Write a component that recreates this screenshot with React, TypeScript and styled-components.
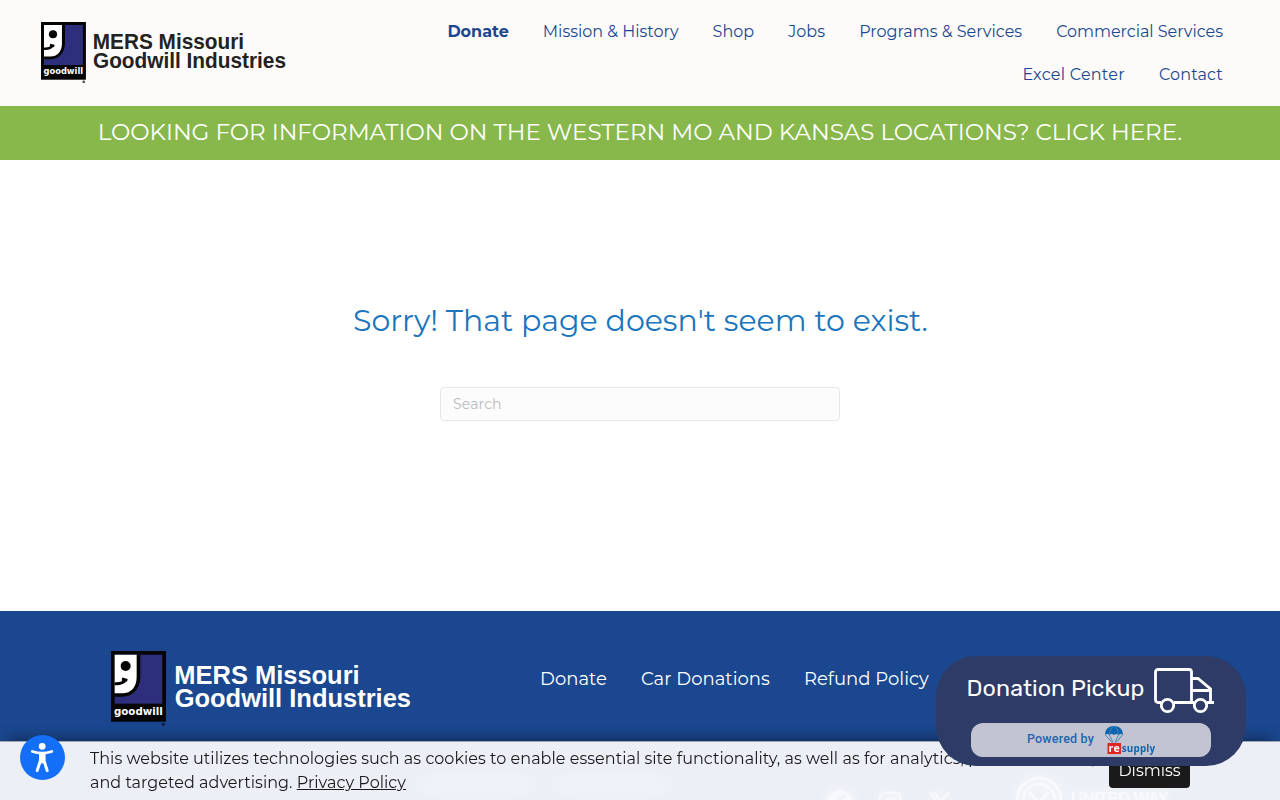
import React from 'react'
import styled, { createGlobalStyle } from 'styled-components'
import { FaFacebook, FaInstagram, FaXTwitter } from 'react-icons/fa6'

const GlobalStyle = createGlobalStyle`
  * {
    box-sizing: border-box;
  }

  body {
    margin: 0;
    height: 800px;
    overflow: hidden;
    background: #ffffff;
    font-family: Montserrat, Inter, sans-serif;
  }
`

const Page = styled.div`
  display: flex;
  flex-direction: column;
  height: 800px;
  overflow: hidden;
`

const Header = styled.header`
  display: flex;
  justify-content: space-between;
  flex: none;
  height: 106px;
  padding: 10px 40px 0 41px;
  background: #fdfbf9;
`

const HeaderLogo = styled.div`
  padding-top: 12px;
`

const MainNav = styled.nav`
  display: flex;
  flex-wrap: wrap;
  justify-content: flex-end;
  align-content: flex-start;
  width: 820px;
`

const NavLink = styled.a<{ bold?: boolean; track?: number }>`
  padding: 0 17px;
  color: #1a478f;
  font-size: 16px;
  font-weight: ${({ bold }) => (bold ? 700 : 400)};
  line-height: 43px;
  letter-spacing: ${({ track = 0 }) => track}px;
  white-space: nowrap;
`

const Banner = styled.div`
  flex: none;
  height: 54px;
  background: #88b74c;
  color: #ffffff;
  font-size: 23px;
  font-weight: 400;
  line-height: 53px;
  text-align: center;
  white-space: nowrap;
`

const Main = styled.main`
  display: flex;
  flex-direction: column;
  align-items: center;
  flex: none;
  height: 451px;
  padding-top: 140px;
`

const Title = styled.h1`
  margin: 0;
  padding-left: 1px;
  color: #1a75bc;
  font-size: 30px;
  font-weight: 400;
  line-height: 42px;
`

const SearchInput = styled.input`
  width: 400px;
  height: 34px;
  margin-top: 45px;
  padding: 6px 12px;
  border: 1px solid #e6e6e6;
  border-radius: 4px;
  background: #fcfcfc;
  font-family: inherit;
  font-size: 14px;
  letter-spacing: 0.15px;

  &::placeholder {
    color: #bbbbbb;
  }
`

const Footer = styled.footer`
  flex: 1;
  padding: 40px 110px 0 111px;
  background: #1a478f;
`

const FooterTop = styled.div`
  display: flex;
  height: 125px;
`

const FooterNav = styled.nav`
  display: flex;
  padding: 16px 0 0 112px;
`

const FooterLink = styled.a`
  padding: 0 17px;
  color: #ffffff;
  font-size: 18px;
  line-height: 24px;
  letter-spacing: 0.03px;
  white-space: nowrap;
`

const FooterBottom = styled.div`
  display: flex;
  justify-content: flex-end;
  color: #ffffff;
`

const Haze = styled.div<{ width: number }>`
  width: ${({ width }) => width}px;
  height: 10px;
  margin: 4px 12px 0;
  border-radius: 5px;
  background: rgba(255, 255, 255, 0.4);
  filter: blur(8px);
`

const Socials = styled.div`
  display: flex;
  gap: 24px;
  margin: 14px 62px 0 149px;
  font-size: 26px;
  opacity: 0.6;
  filter: drop-shadow(0 0 7px #ffffff);
`

const UnitedWay = styled.div`
  display: flex;
  gap: 8px;
  width: 155px;
  white-space: nowrap;
  opacity: 0.6;
  filter: drop-shadow(0 0 7px #ffffff);

  span {
    margin-top: 13px;
    font-family: 'Liberation Sans', sans-serif;
    font-size: 17px;
    font-weight: 700;
    line-height: 20px;
    letter-spacing: -0.8px;
  }
`

const CookieBar = styled.div`
  position: fixed;
  right: 0;
  bottom: 0;
  left: 0;
  display: flex;
  justify-content: space-between;
  height: 59px;
  padding: 5px 90px 0;
  border-top: 1px solid #a0a5ae;
  background: rgba(255, 255, 255, 0.918);
  box-shadow: 0 -9px 16px -9px rgba(0, 0, 0, 0.55);
  color: #1a1a1a;
`

const CookieText = styled.p`
  width: 1010px;
  margin: 0;
  font-size: 16px;
  line-height: 24px;
  letter-spacing: 0.03px;
`

const PolicyLink = styled.a`
  text-decoration: underline;
`

const Dismiss = styled.button`
  width: 81px;
  height: 35px;
  margin-top: 6px;
  padding: 0;
  border: 0;
  border-radius: 4px;
  background: #1a1a1a;
  color: #ffffff;
  font-family: inherit;
  font-size: 16px;
`

const AccessButton = styled.div`
  position: fixed;
  top: 735px;
  left: 20px;
  width: 45px;
  height: 45px;
`

const PickupWidget = styled.div`
  position: fixed;
  top: 656px;
  left: 936px;
  display: flex;
  flex-direction: column;
  align-items: center;
  width: 310px;
  height: 110px;
  padding-top: 11px;
  border-radius: 40px;
  background: #2d3b66;
`

const PickupRow = styled.div`
  display: flex;
  gap: 9px;
  height: 56px;
  color: #ffffff;
  font-family: Rubik, Roboto, sans-serif;
  font-size: 23.2px;
  line-height: 43px;
  letter-spacing: 0.07px;
  white-space: nowrap;
`

const PoweredBy = styled.div`
  display: flex;
  justify-content: center;
  gap: 10px;
  width: 240px;
  height: 34px;
  padding: 2px 0 0 1px;
  border-radius: 12px;
  background: #c2c5d1;
  color: #2563b3;
  font-family: Roboto, sans-serif;
  font-size: 12.5px;
  font-weight: 500;
  line-height: 28px;
  letter-spacing: 0.2px;
`

const Logo = ({ width, color, dot }: any) => (
  <svg width={width} height={width / 4} viewBox="0 0 900 225">
    <rect width="165" height="212" fill="#050505" />
    <rect x="11" y="11" width="143" height="147" fill="#2d2f7c" />
    <path d="M11 11H88V78C88 112 66 137 34 137H11Z" fill="#050505" />
    <path d="M11 11H77V78C77 108 60 127 34 127H11Z" fill="#ffffff" />
    <circle cx="44" cy="45" r="15" fill="#050505" />
    <path d="M11 98C28 99 38 95 43 86M33 84L49 88" fill="none" stroke="#050505" strokeWidth="9" />
    <text
      x="9"
      y="191"
      fill="#ffffff"
      fontFamily="DejaVu Sans"
      fontWeight="700"
      fontSize="32"
      textLength="146"
      lengthAdjust="spacingAndGlyphs"
    >
      goodwill
    </text>
    <circle cx="157" cy="220" r="5" fill={dot} />
    <g fill={color} fontFamily="Liberation Sans" fontWeight="700" fontSize="78">
      <text x="190" y="98" textLength="556" lengthAdjust="spacingAndGlyphs">
        MERS Missouri
      </text>
      <text x="191" y="169" textLength="709" lengthAdjust="spacingAndGlyphs">
        Goodwill Industries
      </text>
    </g>
  </svg>
)

const Truck = () => (
  <svg width="62" height="47" viewBox="0 0 62 47" fill="none" stroke="#ffffff" strokeWidth="2.8">
    <path d="M8 35.5H5C3.5 35.5 2.5 34.5 2.5 33V5C2.5 3.5 3.5 2.5 5 2.5H36C37.5 2.5 38.5 3.5 38.5 5V35.5M21 35.5H41M54 35.5H61" />
    <path d="M39 11.5H45L57.5 22V35M39 23.5H57" />
    <circle cx="14.5" cy="38.5" r="6.2" />
    <circle cx="47.5" cy="38.5" r="6.2" />
  </svg>
)

const Resupply = () => (
  <svg width="52" height="30" viewBox="0 0 52 30">
    <path
      d="M1 10C1 4 5 1 10 1S19 4 19 10Q17 8 14.5 10Q12.5 8 10 10Q7.5 8 5.5 10Q3 8 1 10Z"
      fill="#0d65ad"
    />
    <path
      d="M1.5 10L8 17.5M5.5 10L9 17.5M14.5 10L11 17.5M18.5 10L12 17.5"
      stroke="#2f76b5"
      strokeWidth="0.8"
    />
    <path d="M5.5 9Q6 4 9 1.5M14.5 9Q14 4 11 1.5" fill="none" stroke="#6ea3d0" strokeWidth="0.5" />
    <rect x="3.5" y="18" width="13.5" height="11" fill="#e1251f" />
    <g fontFamily="Open Sans" fontWeight="700" fontSize="11">
      <text x="4.6" y="26.5" fill="#ffffff" textLength="11.5" lengthAdjust="spacingAndGlyphs">
        re
      </text>
      <text x="17.8" y="26.5" fill="#0d65ad" textLength="33.5" lengthAdjust="spacingAndGlyphs">
        supply
      </text>
    </g>
  </svg>
)

const AccessIcon = () => (
  <svg width="45" height="45" viewBox="0 0 45 45">
    <circle cx="22.5" cy="22.5" r="22.5" fill="#146ff8" />
    <circle cx="22.2" cy="11.3" r="3.4" fill="#ffffff" />
    <path
      d="M12.3 16.5Q22.2 19.8 31.8 16.5"
      fill="none"
      stroke="#ffffff"
      strokeWidth="2.8"
      strokeLinecap="round"
    />
    <path d="M19 17.5H25.4V25L22.2 29L19 25Z" fill="#ffffff" />
    <path
      d="M20.6 19V25L17.2 35.6M23.8 19V25L27.2 35.6"
      fill="none"
      stroke="#ffffff"
      strokeWidth="3"
      strokeLinecap="round"
    />
  </svg>
)

const UnitedWayIcon = () => (
  <svg width="48" height="48" viewBox="0 0 48 48" fill="none" stroke="#ffffff" strokeWidth="3">
    <circle cx="24" cy="24" r="22" />
    <circle cx="24" cy="24" r="16" />
    <path d="M14 16L24 26L34 16" />
  </svg>
)

const navItems = [
  { label: 'Donate', bold: true },
  { label: 'Mission & History' },
  { label: 'Shop' },
  { label: 'Jobs', track: 0.1 },
  { label: 'Programs & Services' },
  { label: 'Commercial Services', track: -0.03 },
  { label: 'Excel Center', track: 0.25 },
  { label: 'Contact', track: 0.15 },
]

const footerItems = ['Donate', 'Car Donations', 'Refund Policy']

export default function App() {
  return (
    <>
      <GlobalStyle />
      <Page>
        <Header>
          <HeaderLogo>
            <Logo width={245} color="#222222" dot="#555555" />
          </HeaderLogo>
          <MainNav>
            {navItems.map(item => (
              <NavLink key={item.label} bold={item.bold} track={item.track}>
                {item.label}
              </NavLink>
            ))}
          </MainNav>
        </Header>
        <Banner>LOOKING FOR INFORMATION ON THE WESTERN MO AND KANSAS LOCATIONS? CLICK HERE.</Banner>
        <Main>
          <Title>Sorry! That page doesn't seem to exist.</Title>
          <SearchInput placeholder="Search" />
        </Main>
        <Footer>
          <FooterTop>
            <Logo width={300} color="#ffffff" dot="#0b1f45" />
            <FooterNav>
              {footerItems.map(label => (
                <FooterLink key={label}>{label}</FooterLink>
              ))}
            </FooterNav>
          </FooterTop>
          <FooterBottom>
            <Haze width={110} />
            <Haze width={110} />
            <Socials>
              <FaFacebook />
              <FaInstagram />
              <FaXTwitter />
            </Socials>
            <UnitedWay>
              <UnitedWayIcon />
              <span>UNITED WAY</span>
            </UnitedWay>
          </FooterBottom>
        </Footer>
      </Page>
      <CookieBar>
        <CookieText>
          This website utilizes technologies such as cookies to enable essential site functionality, as well as for
          analytics, personalization, and targeted advertising. <PolicyLink>Privacy Policy</PolicyLink>
        </CookieText>
        <Dismiss>Dismiss</Dismiss>
      </CookieBar>
      <PickupWidget>
        <PickupRow>
          Donation Pickup
          <Truck />
        </PickupRow>
        <PoweredBy>
          Powered by
          <Resupply />
        </PoweredBy>
      </PickupWidget>
      <AccessButton>
        <AccessIcon />
      </AccessButton>
    </>
  )
}
